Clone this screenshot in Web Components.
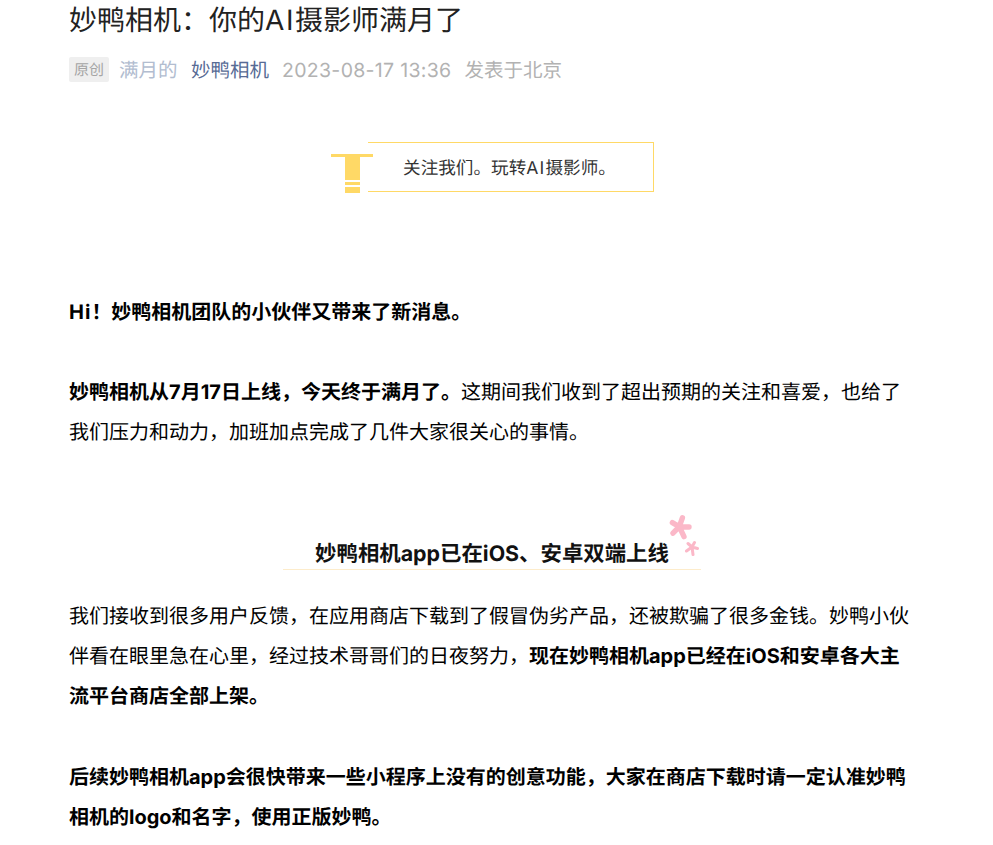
<!DOCTYPE html>
<html lang="zh">
<head>
<meta charset="utf-8">
<title>妙鸭相机</title>
<style>
  html, body { margin: 0; background: #fff; height: 845px; overflow: hidden; }
  body { font-family: Inter, "Noto Sans CJK SC", sans-serif; text-rendering: geometricPrecision; }
</style>
</head>
<body>
<wx-article>
  <wx-header title-text="妙鸭相机：你的AI摄影师满月了" author="满月的" account="妙鸭相机" date="2023-08-17 13:36" place="发表于北京"></wx-header>
  <wx-callout>关注我们。玩转<span style="letter-spacing:1.2px">AI</span>摄影师。</wx-callout>
  <wx-para gap="98"><b><span style="letter-spacing:1px">Hi</span>！妙鸭相机团队的小伙伴又带来了新消息。</b></wx-para>
  <wx-para gap="40"><b>妙鸭相机从7月17日上线，今天终于满月了。</b>这期间我们收到了超出预期的关注和喜爱，也给了我们压力和动力，加班加点完成了几件大家很关心的事情。</wx-para>
  <wx-heading>妙鸭相机app已在iOS、安卓双端上线</wx-heading>
  <wx-para gap="26">我们接收到很多用户反馈，在应用商店下载到了假冒伪劣产品，还被欺骗了很多金钱。妙鸭小伙伴看在眼里急在心里，经过技术哥哥们的日夜努力，<b>现在妙鸭相机app已经在iOS和安卓各大主流平台商店全部上架。</b></wx-para>
  <wx-para gap="41"><b>后续妙鸭相机app会很快带来一些小程序上没有的创意功能，大家在商店下载时请一定认准妙鸭相机的logo和名字，使用正版妙鸭。</b></wx-para>
</wx-article>
<script>
class WxArticle extends HTMLElement {
  constructor() {
    super();
    this.attachShadow({ mode: 'open' });
    this.shadowRoot.innerHTML = `
      <style>
        :host {
          display: block;
          width: 846px;
          margin-left: 69px;
          color: #000;
        }
      </style>
      <slot></slot>
    `;
  }
}

class WxHeader extends HTMLElement {
  constructor() {
    super();
    this.attachShadow({ mode: 'open' });
  }

  connectedCallback() {
    const attr = name => this.getAttribute(name) || '';
    this.shadowRoot.innerHTML = `
      <style>
        :host { display: block; }
        h1 {
          margin: 0;
          padding-top: 1px;
          font-size: 28px;
          font-weight: 400;
          line-height: 38px;
          color: #222;
        }
        h1 .latin { letter-spacing: 1.6px; }
        .meta {
          display: flex;
          align-items: center;
          margin-top: 17px;
          font-size: 19.5px;
          line-height: 28px;
          color: #b2b2b2;
          white-space: nowrap;
        }
        .tag {
          width: 40px;
          height: 25px;
          margin: 0 10px 2px 0;
          border-radius: 2px;
          background: #efefef;
          color: #a5a5a5;
          font-size: 15px;
          line-height: 25px;
          text-align: center;
        }
        .author { margin-right: 13.5px; color: #b2bdd0; }
        .account { margin-right: 13px; color: #576b95; }
        .date { margin-right: 13px; letter-spacing: .3px; }
      </style>
      <h1>${attr('title-text').replace('AI', '<span class="latin">AI</span>')}</h1>
      <div class="meta">
        <span class="tag">原创</span>
        <span class="author">${attr('author')}</span>
        <span class="account">${attr('account')}</span>
        <span class="date">${attr('date')}</span>
        <span>${attr('place')}</span>
      </div>
    `;
  }
}

class WxCallout extends HTMLElement {
  constructor() {
    super();
    this.attachShadow({ mode: 'open' });
    this.shadowRoot.innerHTML = `
      <style>
        :host {
          display: flex;
          width: 323px;
          margin: 58px auto 0;
          font-size: 17.6px;
          color: #333;
        }
        svg { flex: none; width: 42px; height: 40px; margin-top: 12px; margin-right: -5px; position: relative; }
        .box {
          flex: 1;
          box-sizing: border-box;
          height: 50px;
          padding-right: 1px;
          border: 1px solid #ffd966;
          border-left: 0;
          line-height: 51px;
          text-align: center;
          white-space: nowrap;
        }
      </style>
      <svg viewBox="0 0 42 40" fill="#ffd966" aria-hidden="true">
        <rect x="0" y="0" width="42" height="3"/>
        <rect x="14" y="3" width="15" height="23"/>
        <rect x="14" y="28" width="15" height="3"/>
        <rect x="14" y="33" width="15" height="6"/>
      </svg>
      <div class="box"><slot></slot></div>
    `;
  }
}

class WxPara extends HTMLElement {
  static get observedAttributes() {
    return ['gap'];
  }

  constructor() {
    super();
    this.attachShadow({ mode: 'open' });
    this.shadowRoot.innerHTML = `
      <style>
        :host {
          display: block;
          font-size: 20px;
          line-height: 40px;
          color: #000;
        }
      </style>
      <slot></slot>
    `;
  }

  attributeChangedCallback(name, oldValue, newValue) {
    if (name === 'gap') {
      this.style.marginTop = parseInt(newValue, 10) + 'px';
    }
  }
}

class WxHeading extends HTMLElement {
  constructor() {
    super();
    this.attachShadow({ mode: 'open' });
    this.shadowRoot.innerHTML = `
      <style>
        :host {
          display: block;
          position: relative;
          box-sizing: border-box;
          width: 418px;
          height: 45px;
          margin: 73px auto 0;
          border-bottom: 1px solid #fdeccb;
          font-size: 21.4px;
          font-weight: 700;
          line-height: 58px;
          text-align: center;
          color: #111;
          white-space: nowrap;
        }
        .petals { position: absolute; right: 0; top: -15px; width: 36px; height: 46px; }
      </style>
      <slot></slot>
      <svg class="petals" viewBox="0 0 36 46" fill="none" stroke="#fbb8c8" stroke-linecap="round" aria-hidden="true">
        <path stroke-width="5.4" d="M14.3 16.7 L17.4 7.8 M14.3 16.7 L24 17 M14.3 16.7 L19 26.6 M14.3 16.7 L8 23.2 M14.3 16.7 L7.4 12.6"/>
        <path stroke-width="3" d="M27 37 L29.5 32.5 M27 37 L32.5 38.5 M27 37 L28 44.5 M27 37 L21.5 41 M27 37 L23 33.5"/>
      </svg>
    `;
  }
}

customElements.define('wx-article', WxArticle);
customElements.define('wx-header', WxHeader);
customElements.define('wx-callout', WxCallout);
customElements.define('wx-para', WxPara);
customElements.define('wx-heading', WxHeading);
</script>
</body>
</html>
